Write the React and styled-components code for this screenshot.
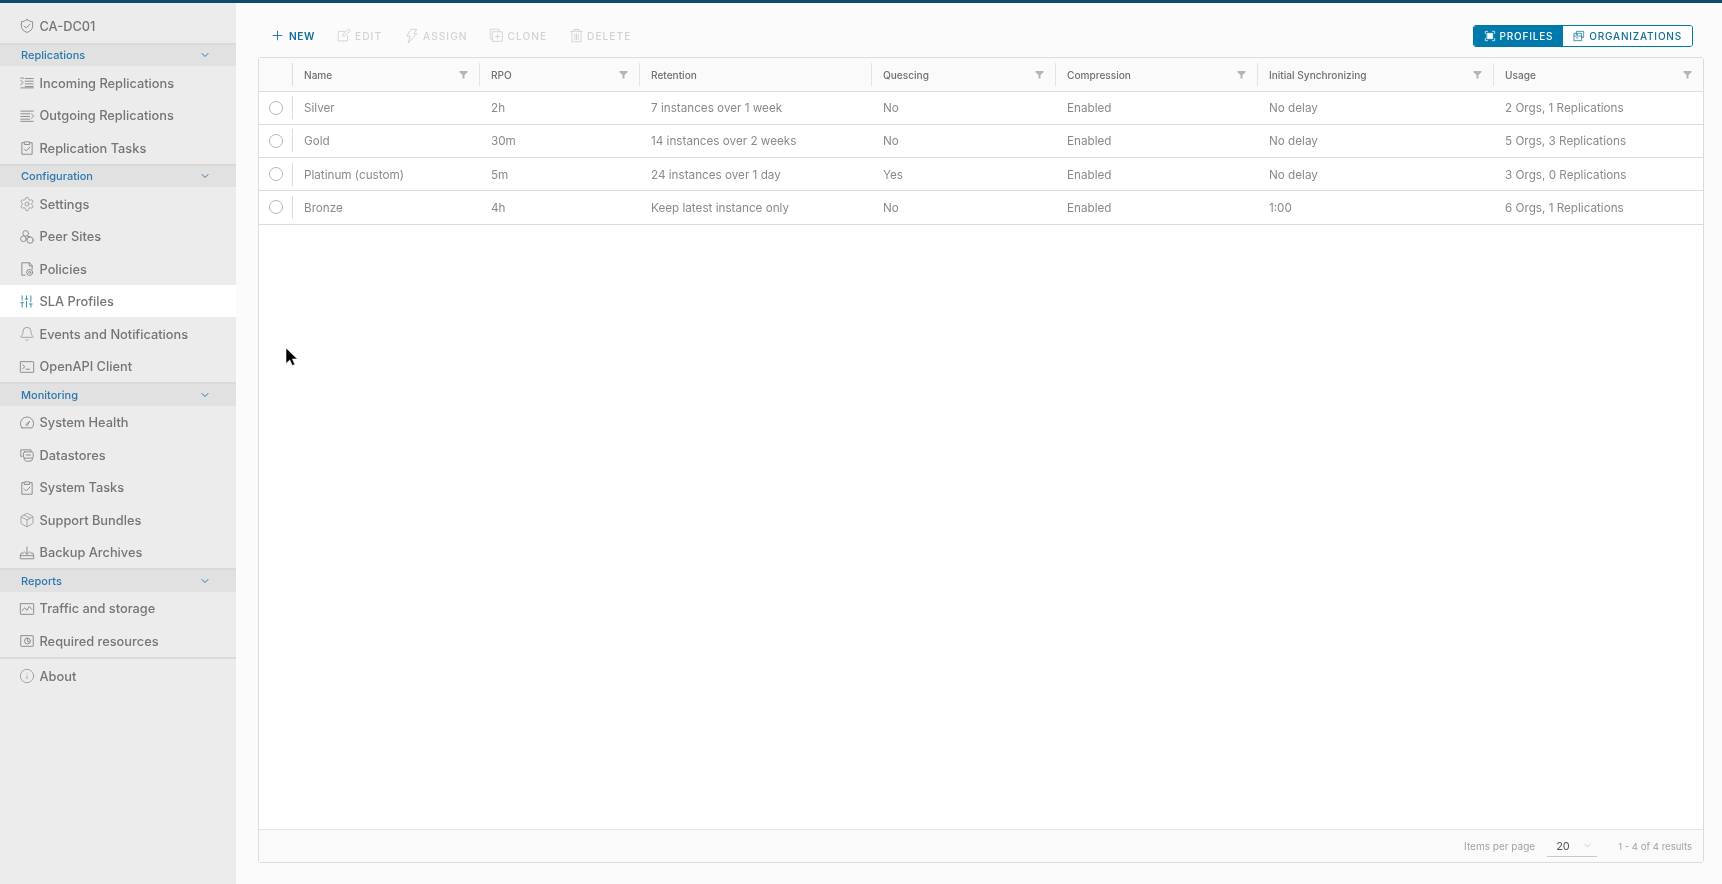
import styled, { createGlobalStyle } from "styled-components";
import {
  ChevronDown,
  Plus,
  Settings,
  Bell,
  SlidersVertical,
  Info,
  Package,
} from "lucide-react";

const GlobalStyle = createGlobalStyle`
  html, body {
    margin: 0;
    height: 100%;
    overflow: hidden;
    background: #fbfbfb;
  }
  body, button {
    font-family: "Inter", "Open Sans", "Liberation Sans", sans-serif;
  }
  * {
    box-sizing: border-box;
  }
`;

// Clarity style line icons, 18 unit grid
const Glyph = ({ size = 16, children }) => (
  <svg
    width={size}
    height={size}
    viewBox="0 0 18 18"
    fill="none"
    stroke="currentColor"
    strokeWidth="1.1"
    strokeLinecap="round"
    strokeLinejoin="round"
  >
    {children}
  </svg>
);

const ShieldIcon = () => (
  <Glyph>
    <path d="M9 1.800c2 1.500 4 2.200 6.300 2.400v5c0 3.500-2.700 5.900-6.300 7-3.600-1.100-6.300-3.500-6.300-7v-5C5 4 7 3.300 9 1.800z" />
    <path d="M5.800 9l2.300 2.300 4.200-4.400" />
  </Glyph>
);
const IncomingIcon = () => (
  <Glyph>
    <path d="M7 4h9M7 7h9M7 10h9M7 13h9M2 14.500h14" />
    <path d="M2 6l2.500 2.500L2 11" />
    <path d="M2 3.500h3" />
  </Glyph>
);
const OutgoingIcon = () => (
  <Glyph>
    <path d="M2 3.500h14M2 6.500h10M2 9.500h10M2 12.500h10M2 15h14" />
    <path d="M14 6.500l2.500 2.500-2.500 2.500" />
  </Glyph>
);
const TasksIcon = () => (
  <Glyph>
    <path d="M6 3H3.200v13h11.600V3H12" />
    <path d="M6 4.600V2.600c0-.3.200-.5.500-.5h5c.3 0 .5.200.5.500v2z" />
    <path d="M5.800 10l2.400 2.400 4-4.400" />
  </Glyph>
);
const PeerIcon = () => (
  <Glyph>
    <circle cx="7.500" cy="5" r="3.200" />
    <circle cx="5" cy="11" r="3.200" />
    <circle cx="12.500" cy="12.500" r="3.600" />
    <path d="M9.500 8.200l3 .6" />
  </Glyph>
);
const PolicyIcon = () => (
  <Glyph>
    <path d="M7 16H3.200V2h8.600l3 3v4" />
    <path d="M11.500 2v3.500h3.300" />
    <circle cx="12" cy="12.800" r="3.400" />
    <circle cx="12" cy="12.800" r="1.200" />
  </Glyph>
);
const ConsoleIcon = () => (
  <Glyph>
    <rect x="1.500" y="3" width="15" height="12" rx="0.6" />
    <path d="M4 6.500l2.600 2.200L4 11M7.800 11.500h4" />
  </Glyph>
);
const GaugeIcon = () => (
  <Glyph>
    <path d="M3.400 14.500h11.200a7.400 7.400 0 1 0-11.200 0z" />
    <path d="M8 10.500l4-3.500-2.600 4.600z" />
  </Glyph>
);
const DatastoreIcon = () => (
  <Glyph>
    <path d="M3.500 10.500H2V3.200h11.500V5" />
    <rect x="5" y="5.500" width="11" height="7" rx="1.500" />
    <path d="M6 12.500v1.800c0 .9 2 1.700 4.500 1.700s4.500-.8 4.500-1.700v-1.800M8 9h5" />
  </Glyph>
);
const BackupIcon = () => (
  <Glyph>
    <path d="M5 9H2.500L1.500 12v3.500h15V12l-1-3H13" />
    <path d="M1.500 12h15M9 2v8.500M6 7.500l3 3 3-3" />
  </Glyph>
);
const ChartIcon = () => (
  <Glyph>
    <rect x="1.500" y="3" width="15" height="12" rx="0.5" />
    <path d="M3.500 11l3-3.500 2.500 3 2.500-4.500 3 3.500" />
  </Glyph>
);
const ResourceIcon = () => (
  <Glyph>
    <rect x="2" y="3" width="14" height="12" rx="0.5" />
    <circle cx="9.500" cy="9" r="3.300" />
    <path d="M9.500 9V5.700M9.500 9l2.600 2" />
  </Glyph>
);
const FilterIcon = () => (
  <svg width="9" height="9" viewBox="0 0 9 9" fill="#b4b4b4">
    <path d="M0.500 1h8v1.300L5.500 5v3.500h-2V5L0.500 2.300z" />
  </svg>
);
const EditIcon = () => (
  <Glyph size={15}>
    <path d="M12.500 9.500v6h-11V4h8" />
    <path d="M7 9.500l.3-2.200 7-6 1.900 2-6.900 6z" />
  </Glyph>
);
const BoltIcon = () => (
  <Glyph size={16}>
    <path d="M8.500 1.500h6l-3.500 5h3.500L4.500 17l2.500-8H3.500z" />
  </Glyph>
);
const CloneIcon = () => (
  <Glyph size={15}>
    <path d="M4 13H1.500V1.500H12V4" />
    <rect x="4.500" y="4.500" width="11.500" height="11.500" />
    <path d="M10.200 7.500v5.500M7.500 10.200h5.500" />
  </Glyph>
);
const TrashIcon = () => (
  <Glyph size={15}>
    <path d="M2 4h14M6 4V1.800h6V4M3.500 4v12.500h11V4M7 7v7M9 7v7M11 7v7" />
  </Glyph>
);
const ProfilesIcon = () => (
  <Glyph size={12}>
    <path d="M2 5.500V2h3.500M12.500 2H16v3.500M16 12.500V16h-3.500M5.500 16H2v-3.500" />
    <rect x="5" y="5" width="8" height="8" fill="currentColor" />
  </Glyph>
);
const OrgsIcon = () => (
  <Glyph size={12}>
    <path d="M5 5V2h11v9h-3M2 5h11v11H2zM2 9h11M5 7h2M5 12h2" />
  </Glyph>
);

const GROUPS = [
  {
    title: "Replications",
    items: [
      ["Incoming Replications", IncomingIcon],
      ["Outgoing Replications", OutgoingIcon],
      ["Replication Tasks", TasksIcon],
    ],
  },
  {
    title: "Configuration",
    items: [
      ["Settings", () => <Settings size={16} strokeWidth={1.1} />],
      ["Peer Sites", PeerIcon],
      ["Policies", PolicyIcon],
      ["SLA Profiles", () => <SlidersVertical size={15} strokeWidth={1.5} />, true],
      ["Events and Notifications", () => <Bell size={16} strokeWidth={1.1} />],
      ["OpenAPI Client", ConsoleIcon],
    ],
  },
  {
    title: "Monitoring",
    items: [
      ["System Health", GaugeIcon],
      ["Datastores", DatastoreIcon],
      ["System Tasks", TasksIcon],
      ["Support Bundles", () => <Package size={16} strokeWidth={1.1} />],
      ["Backup Archives", BackupIcon],
    ],
  },
  {
    title: "Reports",
    items: [
      ["Traffic and storage", ChartIcon],
      ["Required resources", ResourceIcon],
    ],
  },
];

const COLUMNS = [
  "Name",
  "RPO",
  "Retention",
  "Quescing",
  "Compression",
  "Initial Synchronizing",
  "Usage",
];

const ROWS = [
  ["Silver", "2h", "7 instances over 1 week", "No", "Enabled", "No delay", "2 Orgs, 1 Replications"],
  ["Gold", "30m", "14 instances over 2 weeks", "No", "Enabled", "No delay", "5 Orgs, 3 Replications"],
  ["Platinum (custom)", "5m", "24 instances over 1 day", "Yes", "Enabled", "No delay", "3 Orgs, 0 Replications"],
  ["Bronze", "4h", "Keep latest instance only", "No", "Enabled", "1:00", "6 Orgs, 1 Replications"],
];

const ACTIONS = [
  ["EDIT", EditIcon],
  ["ASSIGN", BoltIcon],
  ["CLONE", CloneIcon],
  ["DELETE", TrashIcon],
];

export default function App() {
  return (
    <Page>
      <GlobalStyle />
      <TopBar />
      <Body>
        <Sidebar>
          <BrandItem>
            <NavIcon><ShieldIcon /></NavIcon>
            CA-DC01
          </BrandItem>
          {GROUPS.map((group) => (
            <section key={group.title}>
              <GroupHeader>
                {group.title}
                <ChevronDown size={12} strokeWidth={2} />
              </GroupHeader>
              {group.items.map(([label, Icon, active]) => (
                <NavItem key={label} $active={active}>
                  <NavIcon $active={active}><Icon /></NavIcon>
                  {label}
                </NavItem>
              ))}
            </section>
          ))}
          <AboutItem>
            <NavIcon><Info size={16} strokeWidth={1.1} /></NavIcon>
            About
          </AboutItem>
        </Sidebar>

        <Main>
          <Toolbar>
            <Actions>
              <NewButton>
                <Plus size={15} strokeWidth={1.4} />
                NEW
              </NewButton>
              {ACTIONS.map(([label, Icon]) => (
                <ActionButton key={label} disabled>
                  <Icon />
                  {label}
                </ActionButton>
              ))}
            </Actions>
            <Toggle>
              <ToggleButton $on>
                <ProfilesIcon />
                PROFILES
              </ToggleButton>
              <ToggleButton>
                <OrgsIcon />
                ORGANIZATIONS
              </ToggleButton>
            </Toggle>
          </Toolbar>

          <Grid>
            <HeadRow>
              <SelectCell />
              {COLUMNS.map((col) => (
                <HeadCell key={col}>
                  {col}
                  {col !== "Retention" && <FilterIcon />}
                </HeadCell>
              ))}
            </HeadRow>
            {ROWS.map((row) => (
              <Row key={row[0]}>
                <SelectCell><Radio /></SelectCell>
                {row.map((value, i) => (
                  <Cell key={i}>{value}</Cell>
                ))}
              </Row>
            ))}
            <GridSpacer />
            <Footer>
              <FooterLabel>Items per page</FooterLabel>
              <PageSize>
                20
                <ChevronDown size={11} strokeWidth={1} color="#999" />
              </PageSize>
              <ResultCount>1 - 4 of 4 results</ResultCount>
            </Footer>
          </Grid>
        </Main>
      </Body>

      <Cursor width="14" height="20" viewBox="0 0 14 20">
        <path d="M1 1v15.500l3.800-3.500 2.400 5.500 2.600-1.100-2.400-5.400h5z" fill="#000" stroke="#fff" strokeWidth="0.6" />
      </Cursor>
    </Page>
  );
}

const Page = styled.div`
  height: 884px;
  display: flex;
  flex-direction: column;
  position: relative;
  overflow: hidden;
  filter: blur(0.35px);
`;

const TopBar = styled.div`
  height: 3px;
  flex: none;
  background: #0d4a6b;
`;

const Body = styled.div`
  flex: 1;
  display: flex;
  min-height: 0;
`;

const Sidebar = styled.nav`
  width: 236px;
  flex: none;
  padding-top: 7px;
  background: #ececec;
`;

const NavItem = styled.div`
  height: 32.5px;
  display: flex;
  align-items: center;
  padding: 2px 0 0 17px;
  font-size: 12.8px;
  font-weight: 500;
  color: #757575;
  background: ${(p) => (p.$active ? "#fff" : "transparent")};
`;

const BrandItem = styled(NavItem)`
  padding-top: 0;
`;

const AboutItem = styled(NavItem)`
  height: 37px;
  padding-top: 0;
  border-top: 2px solid #d9d9d9;
`;

const NavIcon = styled.span`
  width: 19px;
  height: 18px;
  margin-right: 3.5px;
  display: flex;
  align-items: center;
  justify-content: center;
  color: ${(p) => (p.$active ? "#2f8a9e" : "#8c8c8c")};
`;

const GroupHeader = styled.div`
  height: 23.5px;
  display: flex;
  align-items: center;
  justify-content: space-between;
  padding: 0 25px 0 21px;
  border-top: 2px solid #d9d9d9;
  background: #e1e1e1;
  font-size: 11px;
  font-weight: 500;
  color: #2a78b0;

  svg {
    color: #2a78b0;
  }
`;

const Main = styled.main`
  flex: 1;
  min-width: 0;
  display: flex;
  flex-direction: column;
  padding: 0 18px 21px 22px;
  background: #fbfbfb;
`;

const Toolbar = styled.div`
  height: 54px;
  flex: none;
  display: flex;
  align-items: center;
  justify-content: space-between;
  padding: 11px 11px 0 12px;
`;

const Actions = styled.div`
  display: flex;
  align-items: center;
  gap: 22px;
`;

const ActionButton = styled.button`
  display: flex;
  align-items: center;
  gap: 3px;
  padding: 0;
  border: 0;
  background: none;
  font-size: 10.2px;
  font-weight: 500;
  letter-spacing: 1px;
  color: #d2d2d2;
`;

const NewButton = styled(ActionButton)`
  gap: 4px;
  color: #0f6f96;
  font-weight: 600;
  letter-spacing: 0.6px;
`;

const Toggle = styled.div`
  display: flex;
  height: 22px;
  border: 1px solid #0079ad;
  border-radius: 3px;
  overflow: hidden;
  background: #fff;
`;

const ToggleButton = styled.button`
  display: flex;
  align-items: center;
  gap: 4px;
  padding: 0 10px;
  border: 0;
  font-size: 10px;
  font-weight: 500;
  letter-spacing: 0.8px;
  background: ${(p) => (p.$on ? "#0079ad" : "#fff")};
  color: ${(p) => (p.$on ? "#fff" : "#0f6f96")};
`;

const Grid = styled.div`
  flex: 1;
  display: flex;
  flex-direction: column;
  min-height: 0;
  background: #fff;
  border: 1px solid #dcdcdc;
  border-radius: 3px;
`;

const rowColumns = "34px 187px 160px 232px 184px 202px 236px 1fr";

const HeadRow = styled.div`
  height: 33.5px;
  display: grid;
  grid-template-columns: ${rowColumns};
  align-items: center;
  background: #fafafa;
  border-bottom: 1px solid #dcdcdc;
`;

const Row = styled.div`
  height: 33.25px;
  display: grid;
  grid-template-columns: ${rowColumns};
  align-items: center;
  border-bottom: 1px solid #dcdcdc;
`;

const SelectCell = styled.div`
  height: 23px;
  display: flex;
  align-items: center;
  justify-content: center;
  border-right: 1px solid #dcdcdc;
`;

const HeadCell = styled.div`
  height: 23px;
  display: flex;
  align-items: center;
  justify-content: space-between;
  padding: 1px 11px 0;
  border-right: 1px solid #e4e4e4;
  font-size: 10.1px;
  font-weight: 500;
  color: #707070;

  &:last-child {
    border-right: 0;
  }
`;

const Cell = styled.div`
  padding: 1px 0 0 11px;
  font-size: 11.7px;
  color: #8a8a8a;
`;

const Radio = styled.span`
  width: 14px;
  height: 14px;
  border: 1px solid #b5b5b5;
  border-radius: 50%;
  background: #fff;
`;

const GridSpacer = styled.div`
  flex: 1;
`;

const Footer = styled.div`
  height: 33px;
  flex: none;
  display: flex;
  align-items: center;
  justify-content: flex-end;
  gap: 12px;
  padding-right: 11px;
  background: #fafafa;
  border-top: 1px solid #e4e4e4;
`;

const FooterLabel = styled.span`
  font-size: 10px;
  color: #a2a2a2;
`;

const ResultCount = styled(FooterLabel)`
  font-size: 9.6px;
`;

const PageSize = styled.div`
  width: 50px;
  height: 22px;
  display: flex;
  align-items: center;
  justify-content: space-between;
  padding: 0 4px 0 9px;
  border-bottom: 1px solid #c8c8c8;
  margin-right: 9px;
  font-size: 11px;
  color: #555;
`;

const Cursor = styled.svg`
  position: absolute;
  left: 285px;
  top: 347px;
`;
